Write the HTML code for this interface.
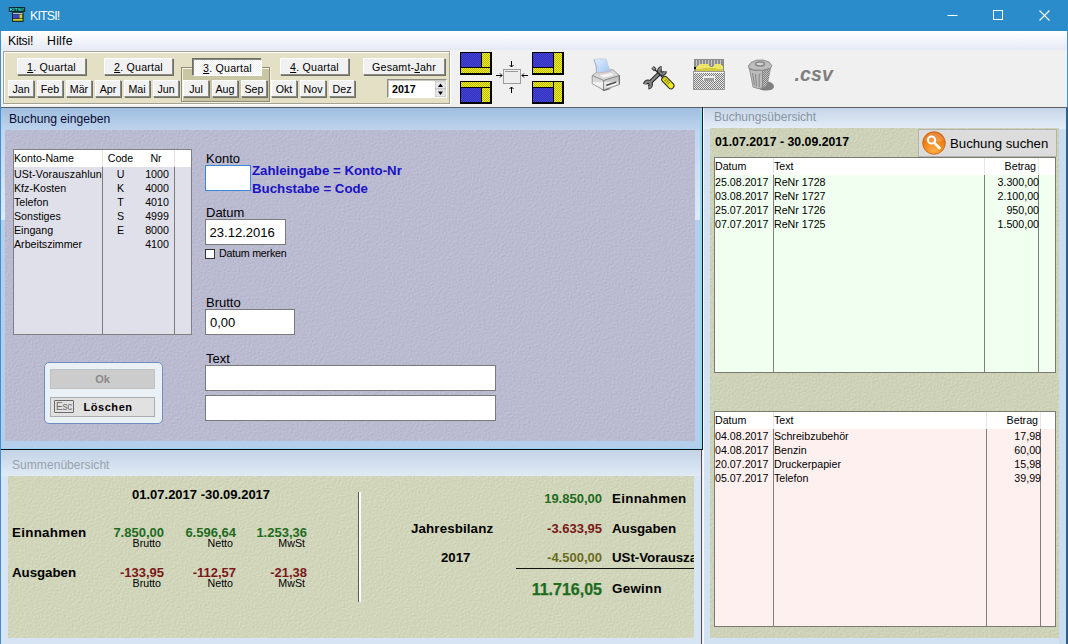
<!DOCTYPE html>
<html lang="de">
<head>
<meta charset="utf-8">
<title>KITSI!</title>
<style>
*{box-sizing:border-box;margin:0;padding:0}
html,body{width:1068px;height:644px;overflow:hidden;background:#f0f0f0}
body{position:relative;font-family:"Liberation Sans",sans-serif;font-size:10.67px;color:#000;line-height:1}
.a{position:absolute}
.t{position:absolute;white-space:nowrap;line-height:1}
.b{font-weight:bold}
/* title bar */
#title{left:0;top:0;width:1068px;height:31px;background:#2b8ccb}
#menu{left:1px;top:31px;width:1066px;height:20px;background:linear-gradient(#ffffff 0%,#f4f6fb 40%,#e4e8f4 100%)}
#tool{left:1px;top:50px;width:1066px;height:57px;background:#f0f0f0}
/* toolbar panel */
#tp{left:3px;top:51px;width:447px;height:53px;background:#e3e0c5;border:1px solid #a3a293;box-shadow:inset 1px 1px 0 #fff,1px 1px 0 #fff}
.btn{position:absolute;background:#f1f1f1;font-size:10.67px;border:1px solid;border-color:#fff #8a8a80 #8a8a80 #fff;box-shadow:1px 1px 0 #6e6e66;text-align:center;line-height:1;white-space:nowrap}
.btn.q{top:58px;height:17px;padding-top:3px;letter-spacing:.2px}
.btn.m{top:80px;height:17px;width:26px;padding-top:3px}
.btn u{text-decoration:underline}
.btn.p{background:#fbfbfb;border-color:#8a8a80 #fff #fff #8a8a80;box-shadow:-1px -1px 0 #6e6e66;background-image:repeating-conic-gradient(#fff 0 25%,#f0f0f0 0 50%);background-size:2px 2px}
/* panels */
.tex{position:absolute}
</style>
</head>
<body>
<svg width="0" height="0" style="position:absolute">
<defs>
<filter id="texP" x="0" y="0" width="100%" height="100%" color-interpolation-filters="sRGB"><feTurbulence type="fractalNoise" baseFrequency="0.6" numOctaves="2" seed="7" result="n"/><feDiffuseLighting in="n" lighting-color="#babad1" surfaceScale="0.17" diffuseConstant="1.22"><feDistantLight azimuth="225" elevation="55"/></feDiffuseLighting></filter>
<filter id="texB" x="0" y="0" width="100%" height="100%" color-interpolation-filters="sRGB"><feTurbulence type="fractalNoise" baseFrequency="0.6" numOctaves="2" seed="7" result="n"/><feDiffuseLighting in="n" lighting-color="#d1d6bb" surfaceScale="0.17" diffuseConstant="1.22"><feDistantLight azimuth="225" elevation="55"/></feDiffuseLighting></filter>
<filter id="texR" x="0" y="0" width="100%" height="100%" color-interpolation-filters="sRGB"><feTurbulence type="fractalNoise" baseFrequency="0.6" numOctaves="2" seed="7" result="n"/><feDiffuseLighting in="n" lighting-color="#cdd2b8" surfaceScale="0.17" diffuseConstant="1.22"><feDistantLight azimuth="225" elevation="55"/></feDiffuseLighting></filter>
</defs>
</svg>

<!-- TITLE BAR -->
<div class="a" id="title"></div>
<svg class="a" style="left:8px;top:6px" width="18" height="17" viewBox="0 0 18 17">
<rect x=".8" y="1" width="16.400" height="5" rx=".8" fill="#06262c"/>
<text x="1.700" y="5.100" font-family="Liberation Sans, sans-serif" font-weight="bold" font-size="4.200" fill="#34e6d2" textLength="14.600" lengthAdjust="spacingAndGlyphs">KITSI!</text>
<rect x="4" y="6.300" width="11.600" height="9.600" fill="#14281c"/>
<rect x="5" y="7.100" width="9.600" height="1" fill="#c9c9dc"/>
<rect x="5" y="8.400" width="6.200" height="4" fill="#4242c6"/>
<rect x="11.500" y="8.400" width="2.800" height="4" fill="#d9d130"/>
<rect x="5" y="13" width="9.600" height="1.700" fill="#d9d130"/>
</svg>
<div class="t" style="left:30px;top:10px;font-size:12.4px;color:#fff;letter-spacing:-.85px">KITSI!</div>
<svg class="a" style="left:930px;top:0" width="138" height="31" viewBox="0 0 138 31">
<path d="M17.5 15.5h10" stroke="#fff" stroke-width="1" fill="none"/>
<rect x="63.5" y="10.5" width="9" height="9" stroke="#fff" stroke-width="1" fill="none"/>
<path d="M109.5 10.500l10 10M119.500 10.500l-10 10" stroke="#fff" stroke-width="1.1" fill="none"/>
</svg>

<!-- MENU -->
<div class="a" id="menu"></div>
<div class="t" style="left:8px;top:35px;font-size:12.3px;letter-spacing:-.25px">Kitsi!</div>
<div class="t" style="left:47px;top:35px;font-size:12.3px;letter-spacing:.25px">Hilfe</div>

<!-- TOOLBAR -->
<div class="a" id="tool"></div>
<div class="a" id="tp"></div>
<div class="a" style="left:181px;top:67px;width:89px;height:35px;background:#c9c6a3;border:1px solid #8f8d78;box-shadow:inset 1px 1px 0 #f4f3e6,1px 1px 0 #f4f3e6"></div>
<div class="btn q" style="left:17px;width:69px"><u>1</u>. Quartal</div>
<div class="btn q" style="left:104px;width:69px"><u>2</u>. Quartal</div>
<div class="btn q p" style="left:193px;top:59px;width:69px"><u>3</u>. Quartal</div>
<div class="btn q" style="left:280px;width:69px"><u>4</u>. Quartal</div>
<div class="btn q" style="left:363px;width:82px">Gesamt-<u>J</u>ahr</div>
<div class="btn m" style="left:8px">Jan</div>
<div class="btn m" style="left:37px">Feb</div>
<div class="btn m" style="left:66px">Mär</div>
<div class="btn m" style="left:95px">Apr</div>
<div class="btn m" style="left:124px">Mai</div>
<div class="btn m" style="left:153px">Jun</div>
<div class="btn m" style="left:183px">Jul</div>
<div class="btn m" style="left:212px">Aug</div>
<div class="btn m" style="left:241px">Sep</div>
<div class="btn m" style="left:271px">Okt</div>
<div class="btn m" style="left:300px">Nov</div>
<div class="btn m" style="left:329px">Dez</div>
<div class="a" style="left:387px;top:79px;width:60px;height:19px;background:#fff;border:1px solid;border-color:#8c8c80 #fff #fff #8c8c80;box-shadow:inset 1px 1px 0 #c8c8c0"></div>
<div class="t b" style="left:392px;top:84px;font-size:10.67px">2017</div>
<svg class="a" style="left:435px;top:81px" width="11" height="16" viewBox="0 0 11 16"><rect x="0" y="0" width="11" height="8" fill="#e6e6e6" stroke="#bdbdbd" stroke-width="1"/><rect x="0" y="8" width="11" height="8" fill="#e6e6e6" stroke="#bdbdbd" stroke-width="1"/><path d="M3 6l2.500-3.500L8 6z" fill="#000"/><path d="M3 10.500l2.500 3.500L8 10.500z" fill="#000"/></svg>
<svg class="a" style="left:460px;top:52px" width="105" height="52" viewBox="0 0 105 52" shape-rendering="crispEdges">
<defs>
<pattern id="pb" width="2" height="2" patternUnits="userSpaceOnUse"><rect width="2" height="2" fill="#2a2ae8"/><rect width="1" height="1" fill="#4a4aa8"/><rect x="1" y="1" width="1" height="1" fill="#4a4aa8"/></pattern>
<pattern id="py" width="2" height="2" patternUnits="userSpaceOnUse"><rect width="2" height="2" fill="#f4f400"/><rect width="1" height="1" fill="#b4b430"/><rect x="1" y="1" width="1" height="1" fill="#b4b430"/></pattern>
</defs>
<!-- icon 1 top-left -->
<rect x="0" y="0" width="32" height="23" fill="#000"/>
<rect x="1" y="1" width="20" height="14" fill="url(#pb)"/>
<rect x="22" y="1" width="8" height="14" fill="url(#py)"/>
<rect x="1" y="16" width="29" height="5" fill="url(#py)"/>
<!-- icon 2 bottom-left -->
<rect x="0" y="29" width="32" height="23" fill="#000"/>
<rect x="1" y="30" width="29" height="5" fill="url(#py)"/>
<rect x="1" y="36" width="20" height="14" fill="url(#pb)"/>
<rect x="22" y="36" width="8" height="14" fill="url(#py)"/>
<!-- icon 3 top-right -->
<rect x="72" y="0" width="32" height="23" fill="#000"/>
<rect x="73" y="1" width="20" height="14" fill="url(#pb)"/>
<rect x="73" y="16" width="20" height="5" fill="url(#py)"/>
<rect x="94" y="1" width="8" height="20" fill="url(#py)"/>
<!-- icon 4 bottom-right -->
<rect x="72" y="29" width="32" height="23" fill="#000"/>
<rect x="73" y="30" width="20" height="5" fill="url(#py)"/>
<rect x="73" y="36" width="20" height="14" fill="url(#pb)"/>
<rect x="94" y="30" width="8" height="20" fill="url(#py)"/>
<!-- centre -->
<rect x="44" y="18" width="17" height="14" fill="#8c8c8c"/>
<rect x="43" y="17" width="17" height="14" fill="#ededed" stroke="#9a9a9a" stroke-width="1"/>
<rect x="45" y="19" width="13" height="1" fill="#9a9a9a"/>
<g stroke="#000" stroke-width="1" fill="none" shape-rendering="auto">
<path d="M51.500 9v6M49.500 13l2 2l2-2"/>
<path d="M51.500 41v-6M49.500 37l2-2l2 2"/>
<path d="M36 23.500h6M40 21.500l2 2l-2 2"/>
<path d="M68 23.500h-6M64 21.500l-2 2l2 2"/>
</g>
</svg>
<svg class="a" style="left:584px;top:54px" width="48" height="42" viewBox="0 0 48 42">
<defs><linearGradient id="pg" x1="0" y1="0" x2="1" y2="1"><stop offset="0" stop-color="#e4effd"/><stop offset="1" stop-color="#9cc3f3"/></linearGradient>
<linearGradient id="pg2" x1="0" y1="0" x2="0" y2="1"><stop offset="0" stop-color="#cfcfcf"/><stop offset=".42" stop-color="#dadada"/><stop offset=".5" stop-color="#f4f4f4"/><stop offset="1" stop-color="#e6e6e6"/></linearGradient>
<linearGradient id="pg3" x1="0" y1="0" x2="0" y2="1"><stop offset="0" stop-color="#bcbcbc"/><stop offset=".4" stop-color="#c8c8c8"/><stop offset=".48" stop-color="#ececec"/><stop offset="1" stop-color="#d6d6d6"/></linearGradient></defs>
<path d="M17 35.500 L20 37 L27 34.800 L24 34 Z" fill="#5a5a5a"/>
<path d="M8.200 21.500 L12.400 18.400 L28.700 15.600 L35.500 21.500 L19.600 26.500 Z" fill="#d9d9d9" stroke="#969696" stroke-width=".9" stroke-linejoin="round"/>
<path d="M8.200 21.500 L19.600 26.500 L19.600 36 L8.200 29.800 Z" fill="url(#pg2)" stroke="#8c8c8c" stroke-width=".8" stroke-linejoin="round"/>
<path d="M19.600 26.500 L35.500 21.500 L35.500 30.500 L19.600 36 Z" fill="url(#pg3)" stroke="#7c7c7c" stroke-width=".8" stroke-linejoin="round"/>
<path d="M35.300 21.700 L35.300 30.300" stroke="#6a6a6a" stroke-width="1.100"/>
<path d="M15 21 L27 18.300 L31 21.200 L19.300 24.300 Z" fill="#f3f3f3" stroke="#c2c2c2" stroke-width=".5"/>
<path d="M22.300 30.600 L32.300 27.200 L32.300 28.800 L22.300 32.300 Z" fill="#4c4c4c"/>
<path d="M23 33 L32 30" stroke="#fff" stroke-width=".8"/>
<path d="M10 5.600 Q16 4.300 22.200 5.200 Q23.500 11.500 26.600 17.200 L12.600 19 Q13 11.500 10 5.600 Z" fill="url(#pg)" stroke="#b9c9dd" stroke-width=".7"/>
<path d="M10 5.600 Q13 11.500 12.600 19" stroke="#9aa4b2" stroke-width=".8" fill="none"/>
<path d="M13 19.200 L26.800 17.400" stroke="#d99" stroke-width=".5"/>
</svg>
<svg class="a" style="left:636px;top:58px" width="48" height="38" viewBox="0 0 48 38" fill="none" stroke-linecap="round">
<g stroke="#2b2b2b" stroke-width="4.400"><path d="M14 24.500 L24 14.800"/><path d="M28.790 13.240 A2.800 2.800 0 1 1 25.760 10.210" stroke-linecap="butt"/><path d="M9.210 26.260 A2.800 2.800 0 1 1 12.240 29.290" stroke-linecap="butt"/></g>
<g stroke="#858585" stroke-width="2.200"><path d="M14 24.500 L24 14.800"/><path d="M28.790 13.240 A2.800 2.800 0 1 1 25.760 10.210" stroke-linecap="butt"/><path d="M9.210 26.260 A2.800 2.800 0 1 1 12.240 29.290" stroke-linecap="butt"/></g>
<path d="M16.600 9.300 L19.200 11.900" stroke="#2b2b2b" stroke-width="3.600" stroke-linecap="butt"/>
<path d="M16.900 9.600 L18.900 11.600" stroke="#a8a8a8" stroke-width="1.800" stroke-linecap="butt"/>
<path d="M19 11.700 L27.500 20.300" stroke="#2b2b2b" stroke-width="1.500"/>
<path d="M28.800 21.500 L35 27.800" stroke="#2b2b2b" stroke-width="7"/>
<path d="M28.800 21.500 L35 27.800" stroke="#f4ec20" stroke-width="5"/>
<g stroke="#6f6a10" stroke-width=".7" stroke-linecap="butt"><path d="M26.800 23 L31.500 27.800"/><path d="M28 21.800 L32.800 26.600"/><path d="M29.300 20.600 L34 25.400"/><path d="M27.200 21.200 L29.200 19.200 M28.800 22.800 L30.800 20.800 M30.400 24.400 L32.400 22.400 M32 26 L34 24"/></g>
</svg>
<svg class="a" style="left:693px;top:59px" width="33" height="32" viewBox="0 0 33 32" shape-rendering="crispEdges">
<defs><pattern id="pgk" width="2" height="2" patternUnits="userSpaceOnUse"><rect width="2" height="2" fill="#e9e9e9"/><rect width="1" height="1" fill="#7d7d7d"/><rect x="1" y="1" width="1" height="1" fill="#7d7d7d"/></pattern></defs>
<rect x="1" y="0" width="30" height="13" fill="#8c8c8c"/>
<g fill="#c9c9c9"><rect x="3" y="1" width="1" height="6"/><rect x="6" y="1" width="1" height="6"/><rect x="9" y="1" width="1" height="6"/><rect x="12" y="1" width="1" height="6"/><rect x="15" y="1" width="1" height="6"/><rect x="18" y="1" width="1" height="6"/><rect x="21" y="1" width="1" height="6"/><rect x="24" y="1" width="1" height="6"/><rect x="27" y="1" width="1" height="6"/></g>
<path d="M3 12 L3 8 L6 5 L14 5 L17 8 L20 8 L22 5 L28 5 L30 8 L30 12 Z" fill="#ece56a"/>
<path d="M3 12 L3 10 L16 9 L30 10 L30 12 Z" fill="#d3cb3f"/>
<rect x="1" y="8" width="2" height="2" fill="#000"/>
<rect x="0" y="12" width="32" height="19" fill="#9a9a9a"/>
<rect x="1" y="13" width="30" height="17" fill="url(#pgk)"/>
<rect x="1" y="13" width="30" height="1" fill="#f4f4f4"/>
<rect x="10" y="17" width="12" height="5" fill="#efefef"/>
<rect x="11" y="19" width="10" height="3" fill="#9f9f9f"/>
</svg>
<svg class="a" style="left:738px;top:54px" width="48" height="42" viewBox="0 0 48 42">
<defs><pattern id="pdk" width="2" height="2" patternUnits="userSpaceOnUse"><rect width="2" height="2" fill="#7f7f7f"/><rect width="1" height="1" fill="#c2c2c2"/><rect x="1" y="1" width="1" height="1" fill="#c2c2c2"/></pattern></defs>
<path d="M20 31 L30 27.500 Q36 28.500 36 33 Q35 36.500 28 36.500 Q22 36.500 20 34 Z" fill="#808080"/>
<path d="M11.500 15 L15 33 Q20 35.500 24.500 34 L24.500 16 Z" fill="#bcbcbc" stroke="#858585" stroke-width=".8"/>
<path d="M24.500 16 L24.500 34 Q27.500 33.500 29 31.500 L32.500 14.500 Z" fill="url(#pdk)" stroke="#808080" stroke-width=".6"/>
<g stroke="#858585" stroke-width="1" fill="none"><path d="M14.500 19 L16.500 31"/><path d="M17.500 20 L18.500 32.500"/><path d="M21 20.500 L21.300 33 M21 20.500 L22.500 20"/></g>
<path d="M10.300 12 L13 8.500 L18.500 6.200 L25 6 L31 8 L33.800 11.500 L32.500 14.500 L24.500 16.500 L16 16.200 L11 14.500 Z" fill="#bdbdbd" stroke="#858585" stroke-width=".9" stroke-linejoin="round"/>
<path d="M11 14.500 L16 16.200 L24.500 16.500 L32.500 14.500" stroke="#8a8a8a" stroke-width="1" fill="none"/>
<ellipse cx="22" cy="10" rx="4.400" ry="1.900" fill="#d6d6d6" stroke="#858585" stroke-width="1.500"/>
</svg>
<div class="t" style="left:794.500px;top:65px;font-size:19.5px;font-weight:bold;font-style:italic;color:#7f7f7f;letter-spacing:.1px">.csv</div>

<div class="a" style="left:1px;top:107px;width:1066px;height:1px;background:#5a5f66"></div>
<div class="a" style="left:1px;top:108px;width:701px;height:341px;background:#b3cfec"></div>
<div class="a" style="left:1px;top:108px;width:701px;height:23px;background:linear-gradient(#a0bee0,#bfd5ee)"></div>
<div class="a" style="left:1px;top:130px;width:4px;height:90px;background:linear-gradient(#bfd5ee,#dcebf8)"></div>
<div class="a" style="left:695px;top:130px;width:5px;height:90px;background:linear-gradient(#bfd5ee,#dcebf8)"></div>
<div class="a" style="left:700px;top:108px;width:2px;height:341px;background:linear-gradient(90deg,#96d2f2,#8edcf6)"></div>
<div class="a" style="left:1px;top:448px;width:701px;height:1px;background:#9ad2f0"></div>
<div class="a" style="left:702px;top:107px;width:1px;height:343px;background:#141c28"></div>
<div class="a" style="left:1px;top:449px;width:702px;height:1px;background:#0c1218"></div>
<div class="t" style="left:9px;top:113px;font-size:12.15px;color:#0a0a32">Buchung eingeben</div>
<svg class="a" style="left:5px;top:130px;background:#bab8d0" width="690" height="311"><rect width="690" height="311" filter="url(#texP)"/></svg>
<div class="a" style="left:1px;top:450px;width:700px;height:194px;background:#d6e4f3"></div>
<div class="a" style="left:1px;top:450px;width:700px;height:26px;background:linear-gradient(#c3d3e6,#e0eaf5)"></div>
<div class="a" style="left:701px;top:450px;width:1px;height:194px;background:#4a4d52"></div><div class="a" style="left:702px;top:450px;width:1px;height:194px;background:#f4f0f4"></div>
<div class="t" style="left:12px;top:459px;font-size:12.1px;color:#9aa2ae">Summenübersicht</div>
<svg class="a" style="left:8px;top:476px;background:#d4d6b6" width="686" height="162"><rect width="686" height="162" filter="url(#texB)"/></svg>
<div class="a" style="left:703px;top:108px;width:363px;height:536px;background:#d3e2f2"></div>
<div class="a" style="left:703px;top:108px;width:363px;height:21px;background:linear-gradient(#c6d6e8,#e4edf7)"></div>
<div class="a" style="left:703px;top:108px;width:1px;height:536px;background:#f6f8fc"></div><div class="a" style="left:1059px;top:129px;width:7px;height:515px;background:#c9dcf0"></div><div class="a" style="left:1066px;top:108px;width:2px;height:536px;background:#2f5f8c"></div>
<div class="t" style="left:714px;top:111px;font-size:12px;color:#8a94a2">Buchungsübersicht</div>
<svg class="a" style="left:710px;top:128px;background:#d0d2b2" width="349" height="510"><rect width="349" height="510" filter="url(#texR)"/></svg>
<div class="a" style="left:13px;top:149px;width:179px;height:186px;background:#e0e0ea;border:1px solid #808080"></div>
<div class="a" style="left:14px;top:150px;width:177px;height:17px;background:#fff"></div>
<div class="a" style="left:102px;top:150px;width:1px;height:184px;background:linear-gradient(#e4e4e4 0,#e4e4e4 17px,#7c7c7c 17px)"></div>
<div class="a" style="left:174px;top:150px;width:1px;height:184px;background:linear-gradient(#e4e4e4 0,#e4e4e4 17px,#7c7c7c 17px)"></div>
<div class="t" style="left:14px;top:153px">Konto-Name</div>
<div class="t" style="left:103px;top:153px;width:35px;text-align:center">Code</div>
<div class="t" style="left:138px;top:153px;width:36px;text-align:center">Nr</div>
<div class="t" style="left:14px;top:169px;width:88px;overflow:hidden;letter-spacing:.12px">USt-Vorauszahlung</div>
<div class="t" style="left:103px;top:169px;width:35px;text-align:center">U</div>
<div class="t" style="left:139px;top:169px;width:36px;text-align:center">1000</div>
<div class="t" style="left:14px;top:183px;width:88px;overflow:hidden">Kfz-Kosten</div>
<div class="t" style="left:103px;top:183px;width:35px;text-align:center">K</div>
<div class="t" style="left:139px;top:183px;width:36px;text-align:center">4000</div>
<div class="t" style="left:14px;top:197px;width:88px;overflow:hidden">Telefon</div>
<div class="t" style="left:103px;top:197px;width:35px;text-align:center">T</div>
<div class="t" style="left:139px;top:197px;width:36px;text-align:center">4010</div>
<div class="t" style="left:14px;top:211px;width:88px;overflow:hidden">Sonstiges</div>
<div class="t" style="left:103px;top:211px;width:35px;text-align:center">S</div>
<div class="t" style="left:139px;top:211px;width:36px;text-align:center">4999</div>
<div class="t" style="left:14px;top:225px;width:88px;overflow:hidden">Eingang</div>
<div class="t" style="left:103px;top:225px;width:35px;text-align:center">E</div>
<div class="t" style="left:139px;top:225px;width:36px;text-align:center">8000</div>
<div class="t" style="left:14px;top:239px;width:88px;overflow:hidden">Arbeitszimmer</div>
<div class="t" style="left:139px;top:239px;width:36px;text-align:center">4100</div>
<div class="t" style="left:206px;top:152px;font-size:13px">Konto</div>
<div class="a" style="left:205px;top:165px;width:46px;height:26px;background:#fff;border:1px solid #3a86d8"></div>
<div class="t b" style="left:252px;top:164px;font-size:13.25px;color:#1a12c4">Zahleingabe = Konto-Nr</div>
<div class="t b" style="left:252px;top:182px;font-size:13.25px;color:#1a12c4">Buchstabe = Code</div>
<div class="t" style="left:206px;top:206px;font-size:13px">Datum</div>
<div class="a" style="left:205px;top:219px;width:81px;height:26px;background:#fff;border:1px solid #7a7a7a"></div>
<div class="t" style="left:209.500px;top:226px;font-size:13.05px">23.12.2016</div>
<div class="a" style="left:205px;top:249px;width:10px;height:10px;background:#fff;border:1px solid #333"></div>
<div class="t" style="left:219px;top:248px;letter-spacing:-.2px">Datum merken</div>
<div class="t" style="left:206px;top:296px;font-size:13px">Brutto</div>
<div class="a" style="left:205px;top:309px;width:90px;height:26px;background:#fff;border:1px solid #7a7a7a"></div>
<div class="t" style="left:210px;top:316px;font-size:13px">0,00</div>
<div class="t" style="left:206px;top:352px;font-size:13px">Text</div>
<div class="a" style="left:205px;top:365px;width:291px;height:26px;background:#fff;border:1px solid #7a7a7a"></div>
<div class="a" style="left:205px;top:395px;width:291px;height:26px;background:#fff;border:1px solid #7a7a7a"></div>
<div class="a" style="left:44px;top:362px;width:119px;height:62px;background:#eaf1f6;border:1px solid #6f8fc4;border-radius:5px"></div>
<div class="a b" style="left:50px;top:369px;width:105px;height:20px;background:#cccccc;border:1px solid #c2c2c2;color:#8a8a8a;font-size:11px;text-align:center;line-height:18px">Ok</div>
<div class="a" style="left:50px;top:397px;width:105px;height:20px;background:#e1e1e1;border:1px solid #adadad"></div>
<div class="a" style="left:54px;top:400px;width:20px;height:13px;border:1px solid #6a6a6a;border-radius:1px;color:#6a6a6a;font-size:10px;text-align:center;line-height:11px;transform-origin:0 0;letter-spacing:-.3px">Esc</div>
<div class="t b" style="left:83.500px;top:402px;font-size:11px;letter-spacing:.55px">Löschen</div>
<div class="t b" style="left:132px;top:488.2px;font-size:13px;color:#000;">01.07.2017 -30.09.2017</div>
<div class="t b" style="left:12px;top:525.5px;font-size:13.33px;color:#000;letter-spacing:.3px">Einnahmen</div>
<div class="t b" style="left:12px;top:565.5px;font-size:13.33px;color:#000;letter-spacing:-.05px">Ausgaben</div>
<div class="t b" style="right:904px;top:525.7px;font-size:13px;color:#1d6b1d;">7.850,00</div>
<div class="t b" style="right:832px;top:525.7px;font-size:13px;color:#1d6b1d;">6.596,64</div>
<div class="t b" style="right:761px;top:525.7px;font-size:13px;color:#1d6b1d;">1.253,36</div>
<div class="t b" style="right:904px;top:565.7px;font-size:13px;color:#7a1818;">-133,95</div>
<div class="t b" style="right:832px;top:565.7px;font-size:13px;color:#7a1818;">-112,57</div>
<div class="t b" style="right:761px;top:565.7px;font-size:13px;color:#7a1818;">-21,38</div>
<div class="t" style="right:907px;top:537.8px;font-size:10.67px;color:#000;">Brutto</div>
<div class="t" style="right:835px;top:537.8px;font-size:10.67px;color:#000;">Netto</div>
<div class="t" style="right:763px;top:537.8px;font-size:10.67px;color:#000;">MwSt</div>
<div class="t" style="right:907px;top:577.5px;font-size:10.67px;color:#000;">Brutto</div>
<div class="t" style="right:835px;top:577.5px;font-size:10.67px;color:#000;">Netto</div>
<div class="t" style="right:763px;top:577.5px;font-size:10.67px;color:#000;">MwSt</div>
<div class="a" style="left:358px;top:492px;width:3px;height:110px;background:linear-gradient(90deg,#5a5a56 0,#5a5a56 1px,#fff 1px,#fff 3px)"></div>
<div class="t b" style="left:411px;top:521.7px;font-size:13.33px;color:#000;letter-spacing:.12px">Jahresbilanz</div>
<div class="t b" style="left:441px;top:551.0px;font-size:13.2px;color:#000;">2017</div>
<div class="t b" style="right:466px;top:491.7px;font-size:13px;color:#1d6b1d;">19.850,00</div>
<div class="t b" style="right:466px;top:521.7px;font-size:13px;color:#7a1818;">-3.633,95</div>
<div class="t b" style="right:466px;top:551.2px;font-size:13px;color:#6b6b20;">-4.500,00</div>
<div class="t b" style="right:466px;top:582px;font-size:16px;color:#1d6b1d;-webkit-text-stroke:.25px #1d6b1d">11.716,05</div>
<div class="t b" style="left:612px;top:491.5px;font-size:13.33px;color:#000;letter-spacing:.3px">Einnahmen</div>
<div class="t b" style="left:612px;top:521.5px;font-size:13.33px;color:#000;letter-spacing:-.05px">Ausgaben</div>
<div class="a" style="left:612px;top:549.0px;width:82px;height:18px;overflow:hidden"><div class="t b" style="left:0;top:2px;font-size:13.33px;letter-spacing:-.05px">USt-Vorauszahlung</div></div>
<div class="t b" style="left:612px;top:581.5px;font-size:13.33px;color:#000;letter-spacing:.3px">Gewinn</div>
<div class="a" style="left:516px;top:568px;width:178px;height:1px;background:#111"></div>
<div class="t b" style="left:715px;top:136px;font-size:12.3px">01.07.2017 - 30.09.2017</div>
<div class="a" style="left:918px;top:129px;width:139px;height:28px;background:#dcdcdc;border:1px solid #b4b4ac"></div>
<svg class="a" style="left:922px;top:131px" width="24" height="24" viewBox="0 0 24 24">
<defs><radialGradient id="og" cx="0.5" cy="0.85" r="0.9"><stop offset="0" stop-color="#ffb04a"/><stop offset="0.45" stop-color="#f58a1f"/><stop offset="1" stop-color="#d9650c"/></radialGradient></defs>
<circle cx="12" cy="12" r="11.300" fill="url(#og)" stroke="#c8600f" stroke-width=".8"/>
<path d="M2.500 9 A9.800 9.800 0 0 1 21.500 9 Q12 13.500 2.500 9Z" fill="#fff" opacity=".18"/>
<circle cx="9.500" cy="9" r="3.600" fill="none" stroke="#fff" stroke-width="2"/>
<path d="M12.300 11.800 L17.500 17" stroke="#fff" stroke-width="2.600" stroke-linecap="round"/>
</svg>
<div class="t" style="left:950px;top:137px;font-size:13.2px">Buchung suchen</div>
<div class="a" style="left:714px;top:157px;width:342px;height:216px;background:#f0fff0;border:1px solid #7a7a72"></div>
<div class="a" style="left:715px;top:158px;width:340px;height:17px;background:#fff"></div>
<div class="a" style="left:773px;top:158px;width:1px;height:214px;background:linear-gradient(#e6e6e6 0,#e6e6e6 17px,#7e7e7e 17px)"></div>
<div class="a" style="left:984px;top:158px;width:1px;height:214px;background:linear-gradient(#e6e6e6 0,#e6e6e6 17px,#7e7e7e 17px)"></div>
<div class="a" style="left:1038px;top:158px;width:1px;height:214px;background:linear-gradient(#e6e6e6 0,#e6e6e6 17px,#7e7e7e 17px)"></div>
<div class="t" style="left:715px;top:161px">Datum</div>
<div class="t" style="left:774px;top:161px">Text</div>
<div class="t" style="right:32px;top:161px">Betrag</div>
<div class="t" style="left:715px;top:177px">25.08.2017</div>
<div class="t" style="left:774px;top:177px">ReNr 1728</div>
<div class="t" style="right:29px;top:177px">3.300,00</div>
<div class="t" style="left:715px;top:191px">03.08.2017</div>
<div class="t" style="left:774px;top:191px">ReNr 1727</div>
<div class="t" style="right:29px;top:191px">2.100,00</div>
<div class="t" style="left:715px;top:205px">25.07.2017</div>
<div class="t" style="left:774px;top:205px">ReNr 1726</div>
<div class="t" style="right:29px;top:205px">950,00</div>
<div class="t" style="left:715px;top:219px">07.07.2017</div>
<div class="t" style="left:774px;top:219px">ReNr 1725</div>
<div class="t" style="right:29px;top:219px">1.500,00</div>
<div class="a" style="left:714px;top:411px;width:342px;height:216px;background:#fff0f0;border:1px solid #7a7a72"></div>
<div class="a" style="left:715px;top:412px;width:340px;height:17px;background:#fff"></div>
<div class="a" style="left:773px;top:412px;width:1px;height:214px;background:linear-gradient(#e6e6e6 0,#e6e6e6 17px,#7e7e7e 17px)"></div>
<div class="a" style="left:986px;top:412px;width:1px;height:214px;background:linear-gradient(#e6e6e6 0,#e6e6e6 17px,#7e7e7e 17px)"></div>
<div class="a" style="left:1040px;top:412px;width:1px;height:214px;background:linear-gradient(#e6e6e6 0,#e6e6e6 17px,#7e7e7e 17px)"></div>
<div class="t" style="left:715px;top:415px">Datum</div>
<div class="t" style="left:774px;top:415px">Text</div>
<div class="t" style="right:30px;top:415px">Betrag</div>
<div class="t" style="left:715px;top:431px">04.08.2017</div>
<div class="t" style="left:774px;top:431px">Schreibzubehör</div>
<div class="t" style="right:27px;top:431px">17,98</div>
<div class="t" style="left:715px;top:445px">04.08.2017</div>
<div class="t" style="left:774px;top:445px">Benzin</div>
<div class="t" style="right:27px;top:445px">60,00</div>
<div class="t" style="left:715px;top:459px">20.07.2017</div>
<div class="t" style="left:774px;top:459px">Druckerpapier</div>
<div class="t" style="right:27px;top:459px">15,98</div>
<div class="t" style="left:715px;top:473px">05.07.2017</div>
<div class="t" style="left:774px;top:473px">Telefon</div>
<div class="t" style="right:27px;top:473px">39,99</div>

<!-- window borders -->
<div class="a" style="left:1067px;top:31px;width:1px;height:77px;background:#3f8fd0"></div>
<div class="a" style="left:0;top:31px;width:1px;height:613px;background:#3f8fd0"></div>
</body>
</html>
